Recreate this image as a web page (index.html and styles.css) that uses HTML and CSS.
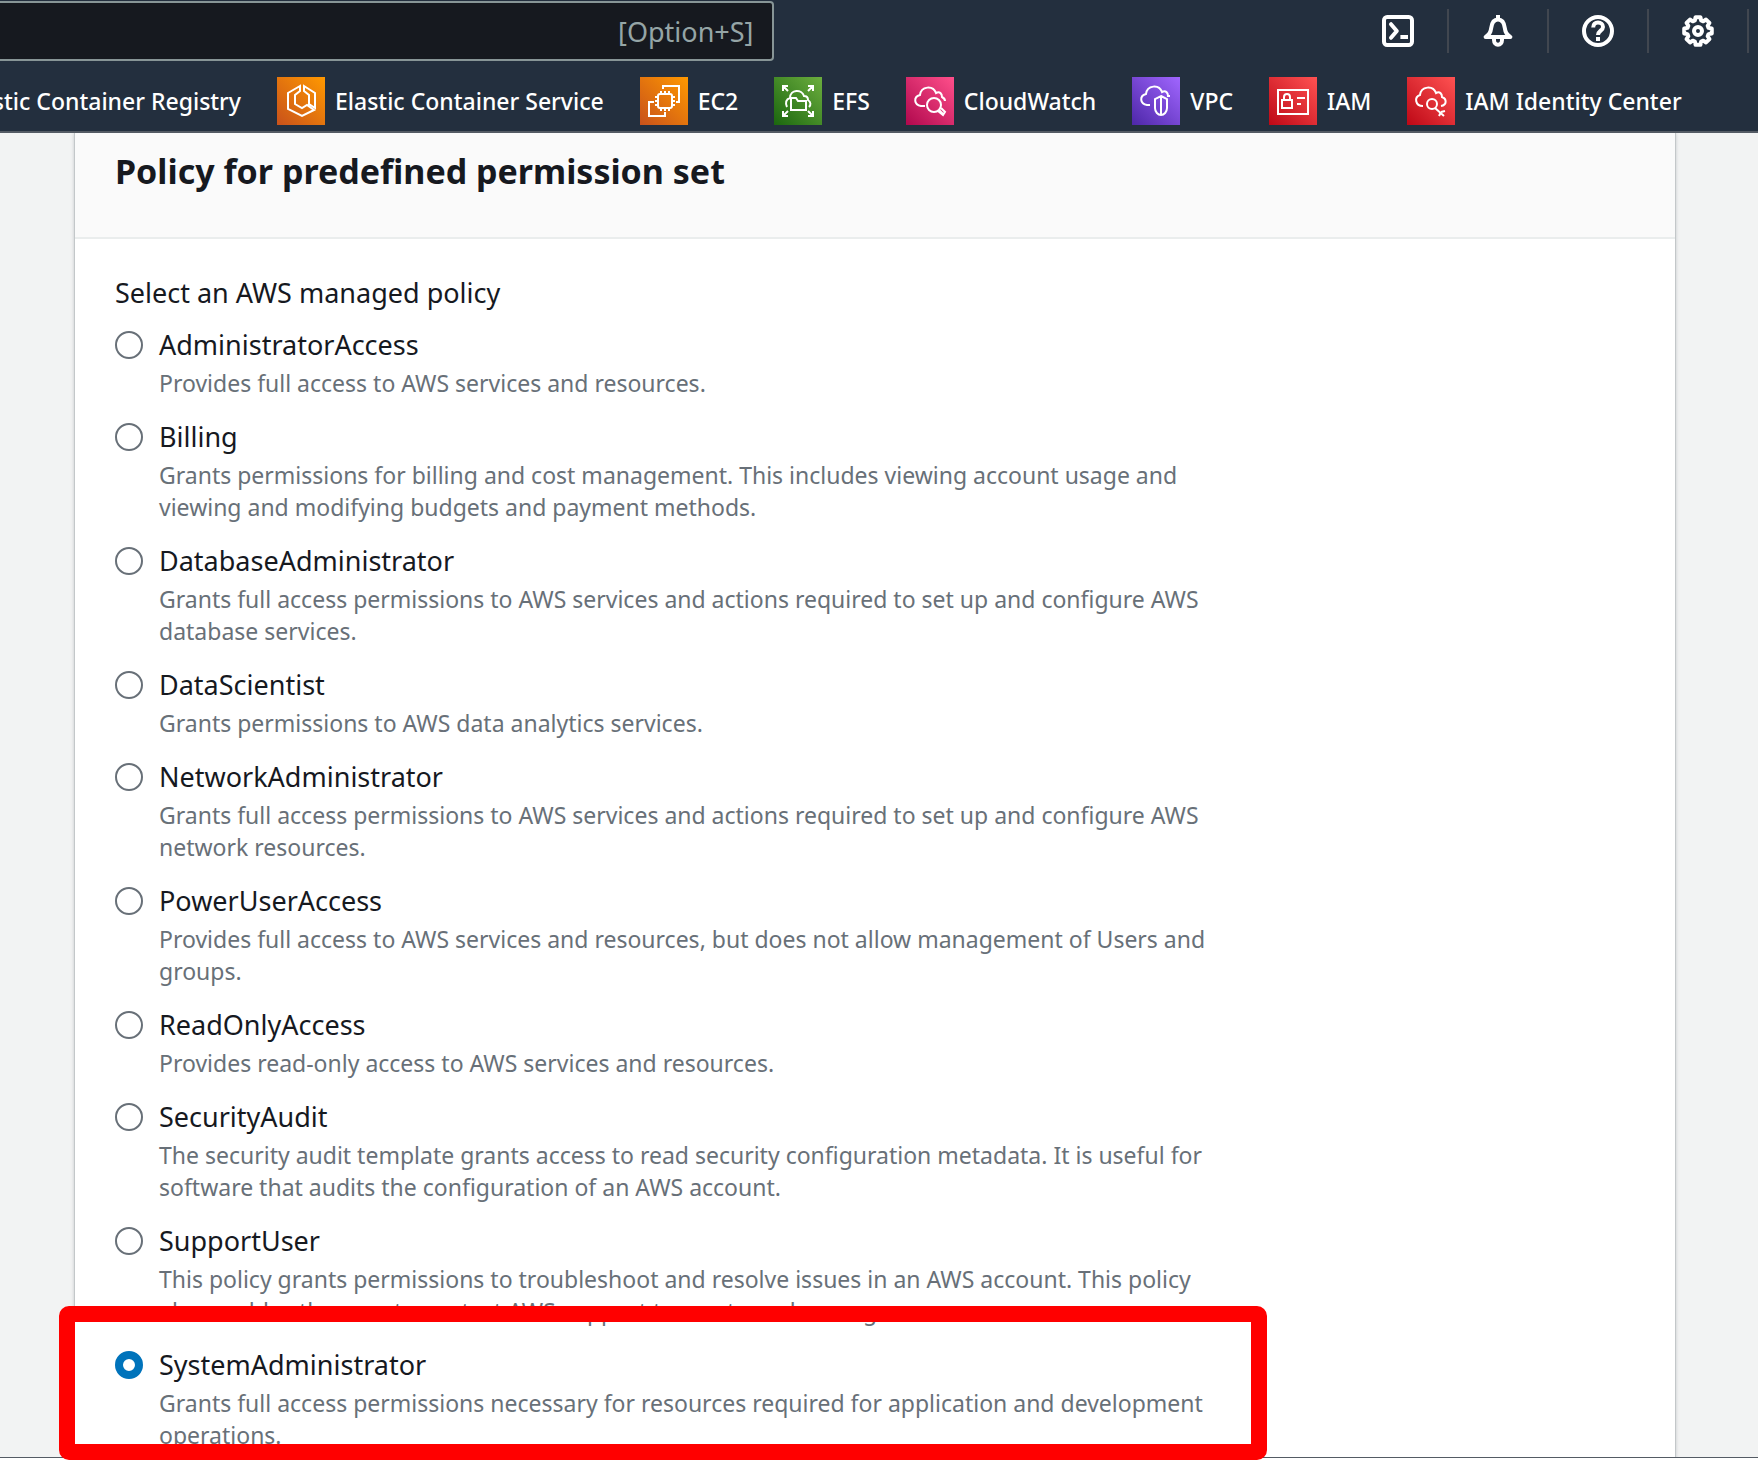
FILE: index.html
```
<!DOCTYPE html>
<html lang="en">
<head>
<meta charset="utf-8">
<title>Policy for predefined permission set</title>
<link rel="stylesheet" href="styles.css">
</head>
<body>
<div class="page">
  <header class="topbar">
    <div class="topbar-main">
      <div class="search">
        <input class="search-input" type="text" placeholder="[Option+S]" aria-label="Search">
      </div>
      <nav class="tools" aria-label="Tools">
        <button class="tool" type="button" aria-label="CloudShell">
          <svg viewBox="0 0 16 16" class="glyph"><rect x="1" y="1" width="14" height="14" rx="1.6"/><path d="M4.500 4.600 7.400 8l-2.900 3.400" stroke-linecap="round"/><path d="M9.2 11h3.800"/></svg>
        </button>
        <button class="tool" type="button" aria-label="Notifications">
          <svg viewBox="0 0 16 16" class="glyph"><path d="M8 0v2M1.800 11C3.700 9.500 4.300 8.800 4.600 6.500 4.900 3.800 6 2.200 8 2.200s3.100 1.600 3.400 4.300c.3 2.300.9 3 2.800 4.500zM6 11.500v1a2 2.400 0 0 0 4 0v-1"/></svg>
        </button>
        <button class="tool" type="button" aria-label="Help">
          <svg viewBox="0 0 16 16" class="glyph"><circle cx="8" cy="8" r="7"/><path d="M5.600 6.200C5.600 4.600 6.600 3.800 8 3.800s2.500.9 2.500 2.200C10.500 7.800 8 7.900 8 10"/><path d="M7 12h2"/></svg>
        </button>
        <button class="tool" type="button" aria-label="Settings">
          <svg viewBox="0 0 16 16" class="glyph"><path d="M9.220 1.110 9.560 2.730 10.620 3.170 12.020 2.270 13.730 3.980 12.830 5.380 13.270 6.440 14.890 6.780V9.220L13.270 9.560 12.830 10.620 13.730 12.020 12.020 13.730 10.620 12.830 9.560 13.270 9.220 14.890H6.780L6.440 13.270 5.380 12.830 3.980 13.730 2.270 12.020 3.170 10.620 2.730 9.560 1.110 9.220V6.780L2.730 6.440 3.170 5.380 2.270 3.980 3.980 2.270 5.380 3.170 6.440 2.730 6.780 1.110z"/><circle cx="8" cy="8" r="2"/></svg>
        </button>
      </nav>
    </div>
    <nav class="favorites" aria-label="Favorites">
      <a class="fav fav-first" href="#">Elastic Container Registry</a>
      <a class="fav" href="#">
        <svg class="tile orange" viewBox="0 0 48 48"><path d="M23 9 11 16v16l14 7 12-6-7-5-5 3-7-4v-9l5-4zM27 9l11 7v15l-6-4v-9l-5-4z"/></svg>
        Elastic Container Service</a>
      <a class="fav" href="#">
        <svg class="tile orange" viewBox="0 0 48 48"><rect x="18" y="17" width="14" height="14" rx="2"/><path d="M21 14v3M25 14v3M29 14v3M21 31v3M25 31v3M29 31v3M15 20h3M15 24h3M15 28h3M32 20h3M32 24h3M32 28h3M23 12V9h16v16h-3M14 25H9v14h16v-4"/></svg>
        EC2</a>
      <a class="fav" href="#">
        <svg class="tile green" viewBox="0 0 48 48"><path d="M17 33V21h5l2 3h8v9zM13 30c-2-4-1-8 3-9 0-9 12-9 14-2 3 0 4 1 4 4 3 2 3 5 1 7M14 14 9 9m0 5V9h5M34 14l5-5m0 5V9h-5M14 34l-5 5m0-5v5h5M34 34l5 5m0-5v5h-5"/></svg>
        EFS</a>
      <a class="fav" href="#">
        <svg class="tile pink" viewBox="0 0 48 48"><path d="M19 29h-4c-7-1-8-9-1-11 1-9 13-10 16-2 4-2 6 1 6 4 2 1 3 2 3 4"/><circle cx="28" cy="28" r="7"/><path d="m33 33 5 5M35 31l4 4-2 3-5-4"/></svg>
        CloudWatch</a>
      <a class="fav" href="#">
        <svg class="tile purple" viewBox="0 0 48 48"><path d="M18 28h-3c-7-1-8-9-1-11 1-9 13-10 16-2 4-2 6 1 6 4h2M29 19l6 3v9c0 4-3 7-6 7s-6-3-6-7v-9zM29 19v19"/></svg>
        VPC</a>
      <a class="fav" href="#">
        <svg class="tile red" viewBox="0 0 48 48"><rect x="9" y="13" width="30" height="24"/><rect x="13" y="23" width="10" height="8"/><path d="M15 23v-3a3 3 0 0 1 6 0v3M28 21h8M28 27h4"/></svg>
        IAM</a>
      <a class="fav" href="#">
        <svg class="tile red" viewBox="0 0 48 48"><path d="M16 29c-8 0-9-9-3-11 1-9 13-10 16-2 4-2 6 1 6 4 5 2 5 8-1 9"/><circle cx="25" cy="27" r="5"/><path d="m28 31 9 8M34 35l-2 4M34 35l4-1"/></svg>
        IAM Identity Center</a>
    </nav>
  </header>
  <main class="content">
    <section class="card">
      <div class="card-header"><h2 class="card-title">Policy for predefined permission set</h2></div>
      <fieldset class="policies">
        <legend class="legend">Select an AWS managed policy</legend>
        <div class="options">
          <label class="option"><input class="radio" type="radio" name="policy"><span class="text"><span class="name">AdministratorAccess</span><span class="desc">Provides full access to AWS services and resources.</span></span></label>
          <label class="option"><input class="radio" type="radio" name="policy"><span class="text"><span class="name">Billing</span><span class="desc">Grants permissions for billing and cost management. This includes viewing account usage and viewing and modifying budgets and payment methods.</span></span></label>
          <label class="option"><input class="radio" type="radio" name="policy"><span class="text"><span class="name">DatabaseAdministrator</span><span class="desc">Grants full access permissions to AWS services and actions required to set up and configure AWS database services.</span></span></label>
          <label class="option"><input class="radio" type="radio" name="policy"><span class="text"><span class="name">DataScientist</span><span class="desc">Grants permissions to AWS data analytics services.</span></span></label>
          <label class="option"><input class="radio" type="radio" name="policy"><span class="text"><span class="name">NetworkAdministrator</span><span class="desc">Grants full access permissions to AWS services and actions required to set up and configure AWS network resources.</span></span></label>
          <label class="option"><input class="radio" type="radio" name="policy"><span class="text"><span class="name">PowerUserAccess</span><span class="desc">Provides full access to AWS services and resources, but does not allow management of Users and groups.</span></span></label>
          <label class="option"><input class="radio" type="radio" name="policy"><span class="text"><span class="name">ReadOnlyAccess</span><span class="desc">Provides read-only access to AWS services and resources.</span></span></label>
          <label class="option"><input class="radio" type="radio" name="policy"><span class="text"><span class="name">SecurityAudit</span><span class="desc">The security audit template grants access to read security configuration metadata. It is useful for software that audits the configuration of an AWS account.</span></span></label>
          <label class="option"><input class="radio" type="radio" name="policy"><span class="text"><span class="name">SupportUser</span><span class="desc">This policy grants permissions to troubleshoot and resolve issues in an AWS account. This policy also enables the user to contact AWS support to create and manage cases.</span></span></label>
          <label class="option"><input class="radio" type="radio" name="policy" checked><span class="text"><span class="name">SystemAdministrator</span><span class="desc">Grants full access permissions necessary for resources required for application and development operations.</span></span></label>
        </div>
      </fieldset>
    </section>
  </main>
  <footer class="footer"></footer>
  <div class="highlight"></div>
</div>
</body>
</html>
```
FILE: styles.css
```
* { box-sizing: border-box; }

body {
  margin: 0;
  font-family: "Noto Sans", "Open Sans", sans-serif;
  color: #16191f;
  background: #f2f3f3;
}

.page {
  position: relative;
  display: flex;
  flex-direction: column;
  height: 100vh;
  overflow: hidden;
}

/* Top navigation */
.topbar {
  flex: none;
  background: #232f3e;
  border-bottom: 2px solid #545b64;
}

.topbar-main {
  display: flex;
  justify-content: space-between;
  align-items: flex-start;
  height: 71px;
}

.search {
  width: 44%;
  padding-top: 1px;
}

.search-input {
  display: block;
  width: 100%;
  height: 60px;
  padding: 0 18px;
  border: 2px solid #879596;
  border-left: 0;
  border-radius: 0 4px 4px 0;
  background: #16191f;
  color: #fff;
  font: 27px "Noto Sans", sans-serif;
  text-align: right;
  appearance: none;
}

.search-input::placeholder { color: #95a5a6; opacity: 1; }

.tools {
  display: flex;
  align-items: center;
  height: 62px;
  padding-right: 9px;
}

.tool {
  display: flex;
  align-items: center;
  justify-content: center;
  width: 100px;
  height: 44px;
  padding: 0;
  border: 0;
  border-right: 2px solid #414750;
  background: none;
}

.glyph {
  width: 32px;
  height: 32px;
  fill: none;
  stroke: #fff;
  stroke-width: 2;
  stroke-linejoin: round;
}

.favorites {
  display: flex;
  align-items: center;
  gap: 36px;
  height: 60px;
}

.fav {
  flex: none;
  display: flex;
  align-items: center;
  gap: 10px;
  color: #fff;
  font-size: 23px;
  font-weight: 500;
  line-height: 48px;
  text-decoration: none;
  white-space: nowrap;
}

.fav-first {
  width: 241px;
  justify-content: flex-end;
}

.tile {
  width: 48px;
  height: 48px;
  fill: none;
  stroke: #fff;
  stroke-width: 2;
}

.orange { background: linear-gradient(45deg, #c8511b, #f90); }
.green { background: linear-gradient(45deg, #1b660f, #6cae3e); }
.pink { background: linear-gradient(45deg, #b0084d, #ff4f8b); }
.purple { background: linear-gradient(45deg, #4d27a8, #a166ff); }
.red { background: linear-gradient(45deg, #bd0816, #ff5252); }

/* Permission set card */
.content {
  flex: 1;
  min-height: 0;
  padding: 0 83px 0 75px;
  overflow: hidden;
}

.card {
  min-height: 100%;
  background: #fff;
  box-shadow: 0 0 0 1px #c3c7c9, 0 0 4px rgba(0, 28, 36, 0.3);
}

.card-header {
  padding: 14px 40px 42px;
  background: #fafafa;
  border-bottom: 2px solid #eaeded;
}

.card-title {
  margin: 0;
  font-size: 34px;
  font-weight: 700;
  line-height: 48px;
}

.policies {
  margin: 0;
  padding: 32px 40px;
  border: 0;
}

.legend {
  float: left;
  width: 100%;
  padding: 0 0 8px;
  font-size: 27px;
  line-height: 44px;
}

.options {
  clear: both;
  display: grid;
  gap: 16px;
}

.option {
  display: flex;
  align-items: flex-start;
  gap: 16px;
}

.radio {
  flex: none;
  width: 28px;
  height: 28px;
  margin: 8px 0 0;
  border: 2px solid #687078;
  border-radius: 50%;
  background: #fff;
  appearance: none;
}

.radio:checked { border: 8px solid #0073bb; }

.text { max-width: 1064px; }

.name {
  display: block;
  font-size: 27px;
  line-height: 44px;
}

.desc {
  display: block;
  color: #687078;
  font-size: 23px;
  line-height: 32px;
}

.footer {
  flex: none;
  height: 3px;
  background: #fff;
  border-top: 1px solid #545b64;
}

/* Annotation frame over the selected policy */
.highlight {
  position: absolute;
  left: 59px;
  bottom: 0;
  width: 1208px;
  height: 154px;
  border: 16px solid #f00;
  border-radius: 10px;
}
```
